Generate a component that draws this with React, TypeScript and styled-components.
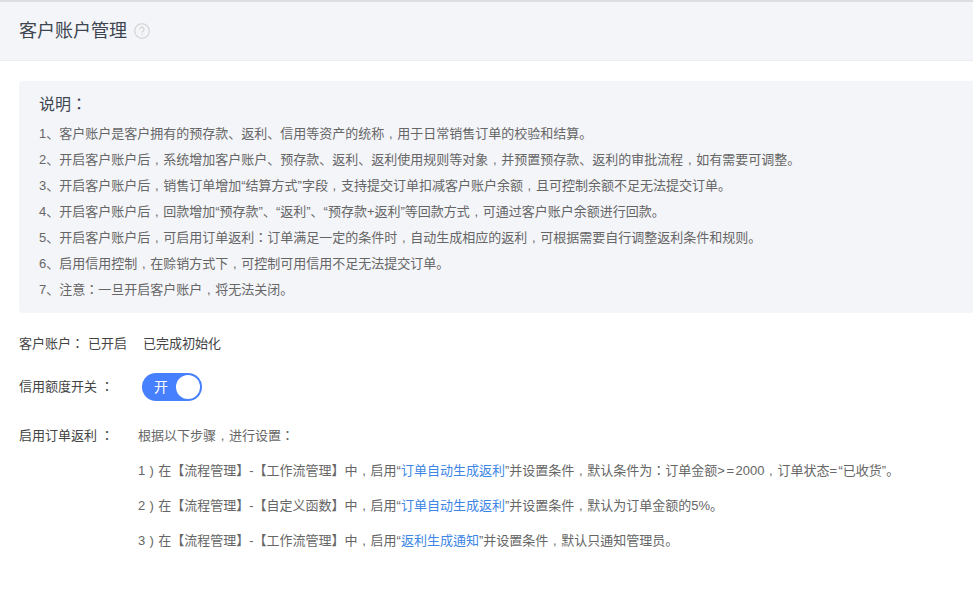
import React from "react";
import styled, { createGlobalStyle } from "styled-components";

const Global = createGlobalStyle`
  html, body { margin: 0; padding: 0; background: #fff; }
  body {
    font-family: "Liberation Sans", "Noto Sans CJK KR", sans-serif;
    font-size: 13px;
    color: #666;
    overflow: hidden;
  }
`;

const Page = styled.div`
  width: 973px;
  height: 589px;
  overflow: hidden;
  background: #fff;
`;

const Header = styled.header`
  height: 61px;
  box-sizing: border-box;
  border-top: 2px solid #dcdde2;
  border-bottom: 1px solid #ebecef;
  background: #f4f5f9;
  padding-left: 19px;
  display: flex;
  align-items: center;
  gap: 7px;
`;

const Title = styled.h1`
  margin: 0;
  font-size: 18px;
  font-weight: 400;
  color: #3d4550;
  line-height: 24px;
`;

const HelpIcon = styled.svg`
  width: 16px;
  height: 16px;
  flex: none;
`;

const Content = styled.main`
  padding: 20px 0 0 19px;
`;

const Notice = styled.section`
  background: #f4f5f9;
  border-radius: 4px 0 0 4px;
  padding: 12px 0 0 20px;
  height: 232px;
  box-sizing: border-box;
`;

const NoticeTitle = styled.h2`
  margin: 0 0 4px;
  font-size: 16px;
  font-weight: 400;
  line-height: 24px;
  color: #3d4550;
`;

const NoticeLine = styled.p`
  margin: 0;
  line-height: 26px;
  font-size: 13px;
  color: #666;
  white-space: nowrap;
`;

const Row = styled.div<{ $mt: number }>`
  display: flex;
  align-items: center;
  margin-top: ${(p) => p.$mt}px;
  line-height: 20px;
  color: #444;
  white-space: nowrap;
`;

const Label = styled.span<{ $w?: number }>`
  color: #444;
  ${(p) => (p.$w ? `width: ${p.$w}px; flex: none;` : "")}
`;

const Value = styled.span<{ $ml: number }>`
  margin-left: ${(p) => p.$ml}px;
  color: #444;
`;

const Switch = styled.div`
  width: 60px;
  height: 28px;
  box-sizing: border-box;
  border-radius: 14px;
  background: #4680ff;
  display: flex;
  align-items: center;
  justify-content: space-between;
  padding: 0 2px 0 12px;
  color: #fff;
  font-size: 14px;
`;

const Knob = styled.span`
  width: 24px;
  height: 24px;
  border-radius: 50%;
  background: #fff;
`;

const Hint = styled.span`
  color: #666;
`;

const Steps = styled.div`
  padding-left: 119px;
  margin-top: 15px;
`;

const Step = styled.p`
  margin: 0 0 15px;
  line-height: 20px;
  color: #666;
  white-space: nowrap;
`;

const Accent = styled.span`
  color: #3d86e6;
`;

const Mark = styled.span`
  display: inline-block;
  width: 1em;
  text-align: center;
  line-height: 1;
`;

const Operator = styled.span`
  letter-spacing: 1.5px;
`;

/* The fullwidth comma and bracket sit in the middle of their cell here. */
function Txt({ children }: { children: string }) {
  const parts = children.split(/([，）])/);
  return (
    <>
      {parts.map((p, i) =>
        p === "，" ? <Mark key={i}>,</Mark> : p === "）" ? <Mark key={i}>)</Mark> : p
      )}
    </>
  );
}

const lines = [
  "1、客户账户是客户拥有的预存款、返利、信用等资产的统称，用于日常销售订单的校验和结算。",
  "2、开启客户账户后，系统增加客户账户、预存款、返利、返利使用规则等对象，并预置预存款、返利的审批流程，如有需要可调整。",
  "3、开启客户账户后，销售订单增加“结算方式”字段，支持提交订单扣减客户账户余额，且可控制余额不足无法提交订单。",
  "4、开启客户账户后，回款增加“预存款”、“返利”、“预存款+返利”等回款方式，可通过客户账户余额进行回款。",
  "5、开启客户账户后，可启用订单返利：订单满足一定的条件时，自动生成相应的返利，可根据需要自行调整返利条件和规则。",
  "6、启用信用控制，在赊销方式下，可控制可用信用不足无法提交订单。",
  "7、注意：一旦开启客户账户，将无法关闭。",
];

export default function App() {
  return (
    <Page>
      <Global />
      <Header>
        <Title>客户账户管理</Title>
        <HelpIcon viewBox="0 0 16 16" aria-hidden="true">
          <circle cx="8" cy="8" r="7.3" fill="none" stroke="#d0d0d0" strokeWidth="1.1" />
          <path d="M5.9 6.3a2.1 2.1 0 1 1 3.3 1.7c-.8.5-1.2.9-1.2 1.8" fill="none" stroke="#d0d0d0" strokeWidth="1.1" />
          <circle cx="8" cy="11.6" r=".7" fill="#d0d0d0" />
        </HelpIcon>
      </Header>
      <Content>
        <Notice>
          <NoticeTitle>说明：</NoticeTitle>
          {lines.map((l) => (
            <NoticeLine key={l}>
              <Txt>{l}</Txt>
            </NoticeLine>
          ))}
        </Notice>
        <Row $mt={21}>
          <Label>客户账户：</Label>
          <Value $ml={4}>已开启</Value>
          <Value $ml={16}>已完成初始化</Value>
        </Row>
        <Row $mt={19}>
          <Label $w={123}>信用额度开关 ：</Label>
          <Switch>
            开<Knob />
          </Switch>
        </Row>
        <Row $mt={25}>
          <Label $w={119}>启用订单返利 ：</Label>
          <Hint>
            <Txt>根据以下步骤，进行设置：</Txt>
          </Hint>
        </Row>
        <Steps>
          <Step>
            <Txt>1）在【流程管理】-【工作流管理】中，启用“</Txt>
            <Accent>订单自动生成返利</Accent>
            <Txt>”并设置条件，默认条件为：订单金额</Txt>
            <Operator>&gt;=</Operator>
            <Txt>2000，订单状态</Txt>
            <Operator>=</Operator>
            <Txt>“已收货”。</Txt>
          </Step>
          <Step>
            <Txt>2）在【流程管理】-【自定义函数】中，启用“</Txt>
            <Accent>订单自动生成返利</Accent>
            <Txt>”并设置条件，默认为订单金额的5%。</Txt>
          </Step>
          <Step>
            <Txt>3）在【流程管理】-【工作流管理】中，启用“</Txt>
            <Accent>返利生成通知</Accent>
            <Txt>”并设置条件，默认只通知管理员。</Txt>
          </Step>
        </Steps>
      </Content>
    </Page>
  );
}
